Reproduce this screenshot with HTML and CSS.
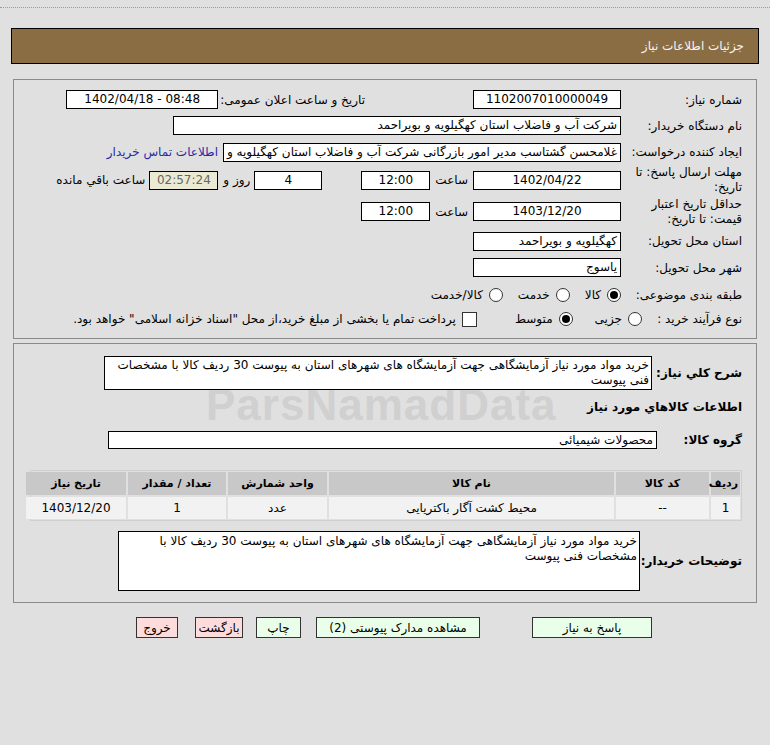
FILE: index.html
```html
<!DOCTYPE html>
<html lang="fa" dir="rtl">
<head>
<meta charset="utf-8">
<title>جزئیات اطلاعات نیاز</title>
<link rel="stylesheet" href="styles.css">
</head>
<body>
<div class="topline"></div>
<div class="header">جزئیات اطلاعات نیاز</div>

<div class="panel p1">
  <div class="row r1">
    <div class="lbl">شماره نیاز:</div>
    <div class="box w148 c">1102007010000049</div>
    <div class="lbl2 m108">تاریخ و ساعت اعلان عمومی:</div>
    <div class="box w152 c ml10" dir="ltr">1402/04/18 - 08:48</div>
  </div>
  <div class="row r2">
    <div class="lbl">نام دستگاه خریدار:</div>
    <div class="box w448">شرکت آب و فاضلاب استان کهگیلویه و بویراحمد</div>
  </div>
  <div class="row r3">
    <div class="lbl">ایجاد کننده درخواست:</div>
    <div class="box w398 clip">غلامحسن گشتاسب مدیر امور بازرگانی شرکت آب و فاضلاب استان کهگیلویه و بویراحمد</div>
    <a class="link" href="#">اطلاعات تماس خریدار</a>
  </div>
  <div class="row r4">
    <div class="lbl two">مهلت ارسال پاسخ: تا تاریخ:</div>
    <div class="box w148 c">1402/04/22</div>
    <div class="lbl2 m5">ساعت</div>
    <div class="box w69 c ml5">12:00</div>
    <div class="box w68 c m39">4</div>
    <div class="lbl2 m4">روز و</div>
    <div class="box w69 c timer ml5">02:57:24</div>
    <div class="lbl2 m4">ساعت باقي مانده</div>
  </div>
  <div class="row r5">
    <div class="lbl two">حداقل تاریخ اعتبار قیمت: تا تاریخ:</div>
    <div class="box w148 c">1403/12/20</div>
    <div class="lbl2 m5">ساعت</div>
    <div class="box w69 c ml5">12:00</div>
  </div>
  <div class="row r6">
    <div class="lbl">استان محل تحویل:</div>
    <div class="box w148">کهگیلویه و بویراحمد</div>
  </div>
  <div class="row r7">
    <div class="lbl">شهر محل تحویل:</div>
    <div class="box w148">یاسوج</div>
  </div>
  <div class="row r8">
    <div class="lbl">طبقه بندی موضوعی:</div>
    <span class="radio on"></span><span class="opt">کالا</span>
    <span class="radio g1"></span><span class="opt">خدمت</span>
    <span class="radio g1"></span><span class="opt">کالا/خدمت</span>
  </div>
  <div class="row r9">
    <div class="lbl short">نوع فرآیند خرید :</div>
    <span class="radio"></span><span class="opt">جزیی</span>
    <span class="radio g2 on"></span><span class="opt">متوسط</span>
    <span class="check"></span><span class="opt">پرداخت تمام یا بخشی از مبلغ خرید،از محل "اسناد خزانه اسلامی" خواهد بود.</span>
  </div>
</div>

<div class="panel p2">
  <div class="wm">ParsNamadData</div>
  <div class="row s1">
    <div class="blbl w84">شرح کلي نیاز:</div>
    <div class="box area1">خرید مواد مورد نیاز آزمایشگاهی جهت آزمایشگاه های شهرهای استان به پیوست 30 ردیف کالا با مشخصات فنی پیوست</div>
  </div>
  <div class="row s2">
    <div class="blbl">اطلاعات کالاهاي مورد نیاز</div>
  </div>
  <div class="row s3">
    <div class="blbl w79">گروه کالا:</div>
    <div class="box w549">محصولات شیمیائی</div>
  </div>
  <div class="grid">
    <div class="th">ردیف</div>
    <div class="th">کد کالا</div>
    <div class="th">نام کالا</div>
    <div class="th">واحد شمارش</div>
    <div class="th">تعداد / مقدار</div>
    <div class="th">تاریخ نیاز</div>
    <div class="td">1</div>
    <div class="td">--</div>
    <div class="td">محیط کشت آگار باکتریایی</div>
    <div class="td">عدد</div>
    <div class="td">1</div>
    <div class="td">1403/12/20</div>
  </div>
  <div class="row s4">
    <div class="blbl w98">توضیحات خریدار:</div>
    <div class="box area2">خرید مواد مورد نیاز آزمایشگاهی جهت آزمایشگاه های شهرهای استان به پیوست 30 ردیف کالا با مشخصات فنی پیوست</div>
  </div>
</div>

<div class="buttons">
  <button class="btn green b1">پاسخ به نیاز</button>
  <button class="btn green b2">مشاهده مدارک پیوستی (2)</button>
  <button class="btn green b3">چاپ</button>
  <button class="btn red b4">بازگشت</button>
  <button class="btn red b5">خروج</button>
</div>
</body>
</html>
```
FILE: styles.css
```css
* { box-sizing: border-box; }
html, body { margin: 0; padding: 0; }
body {
  background: #e0e0e0;
  font-family: Tahoma, "DejaVu Sans", sans-serif;
  font-size: 12px;
  color: #000;
  direction: rtl;
  width: 770px;
  height: 745px;
  overflow: hidden;
}
.topline {
  height: 8px;
  border-bottom: 1px dotted #9a9a9a;
}
.header {
  margin: 20px 11px 0 11px;
  height: 36px;
  background: #8b6d43;
  border: 1px solid #000;
  color: #f4f4f4;
  line-height: 34px;
  padding-right: 14px;
  font-size: 12px;
}
.panel {
  margin: 0 13px;
  border: 1px solid #8a8a8a;
  padding-right: 14px;
  position: relative;
}
.p1 { margin-top: 15px; height: 260px; padding-top: 7px; }
.p2 { margin-top: 4px; height: 260px; padding-top: 12px; }
.row { display: flex; align-items: center; }
.r1 { height: 25px; }
.r2 { height: 27px; }
.r3 { height: 26px; }
.r4 { height: 30px; }
.r5 { height: 33px; }
.r6 { height: 26px; }
.r7 { height: 27px; }
.r8 { height: 27px; }
.r9 { height: 22px; }
.lbl {
  width: 115px;
  margin-left: 6px;
  flex: none;
  white-space: nowrap;
}
.lbl.two { white-space: normal; line-height: 15px; }
.lbl.short { width: 96px; margin-left: 4px; }
.lbl2 { white-space: nowrap; flex: none; }
.m108 { margin-right: 108px; }
.m5 { margin-right: 5px; }
.m4 { margin-right: 4px; }
.m39 { margin-right: 39px; }
.ml10 { margin-right: 2px; }
.ml5 { margin-right: 5px; }
.box {
  background: #fff;
  border: 1px solid #000;
  height: 19px;
  line-height: 17px;
  padding: 0 3px;
  white-space: nowrap;
  overflow: hidden;
  flex: none;
}
.box.c { text-align: center; }
.w148 { width: 148px; }
.w152 { width: 152px; }
.w448 { width: 448px; }
.w398 { width: 398px; }
.w69 { width: 69px; }
.w68 { width: 68px; }
.w549 { width: 549px; }
.timer { background: #ebebd3; color: #666; }
.clip { text-overflow: clip; }
.link {
  color: #2a2aa8;
  text-decoration: none;
  margin-right: 5px;
  white-space: nowrap;
}
.radio {
  width: 14px;
  height: 14px;
  border-radius: 50%;
  border: 1px solid #333;
  background: #fff;
  flex: none;
  position: relative;
  margin-left: 6px;
}
.radio.on::after {
  content: "";
  position: absolute;
  left: 2px; top: 2px;
  width: 8px; height: 8px;
  border-radius: 50%;
  background: #000;
}
.r9 .radio.g2 { margin-right: 22px; }
.r8 .radio.g1 { margin-right: 15px; }
.check {
  width: 15px;
  height: 15px;
  border: 1px solid #333;
  background: #fff;
  flex: none;
  margin-right: 38px;
  margin-left: 6px;
}
.opt { white-space: nowrap; }
.blbl {
  font-weight: bold;
  font-size: 12px;
  white-space: nowrap;
  flex: none;
}
.w84 { width: 84px; margin-left: 6px; }
.w79 { width: 79px; margin-left: 6px; }
.w98 { width: 98px; margin-left: 4px; }
.s1 { height: 34px; }
.area1 {
  width: 548px;
  height: 34px;
  white-space: normal;
  line-height: 15px;
  padding: 1px 2px;
}
.s2 { height: 28px; margin-top: 3px; }
.s3 { height: 18px; margin-top: 10px; }
.s3 .box { height: 18px; line-height: 16px; }
.grid {
  display: grid;
  grid-template-columns: 29px 93px 285px 99px 98px 100px;
  column-gap: 2px;
  row-gap: 2px;
  width: 712px;
  margin-top: 21px;
  padding: 1px;
  border: 1px solid #cfcfcf;
  background: #e0e0e0;
}
.th {
  background: #c8c8c8;
  font-weight: bold;
  font-size: 11px;
  height: 23px;
  line-height: 23px;
  text-align: center;
}
.th:first-child { text-align: right; padding-right: 2px; }
.td {
  background: #f2f2f2;
  height: 22px;
  line-height: 22px;
  text-align: center;
}
.s4 { height: 60px; margin-top: 10px; }
.area2 {
  width: 522px;
  height: 60px;
  white-space: normal;
  line-height: 15px;
  padding: 2px 2px;
}
.wm {
  position: absolute;
  left: 192px;
  top: 36px;
  font-family: "Liberation Sans", Arial, sans-serif;
  font-weight: bold;
  font-size: 44px;
  color: #d0d0d0;
  direction: ltr;
  letter-spacing: 1px;
  pointer-events: none;
}
.p2 .row, .p2 .grid { position: relative; }
.buttons {
  display: flex;
  align-items: center;
  padding-right: 118px;
  margin-top: 14px;
}
.btn {
  font-family: Tahoma, "DejaVu Sans", sans-serif;
  font-size: 12px;
  height: 21px;
  border: 1px solid #333;
  padding: 0;
  color: #000;
  flex: none;
}
.green { background: #eaffea; }
.red { background: #ffdcdc; }
.b1 { width: 120px; }
.b2 { width: 164px; margin-right: 52px; }
.b3 { width: 45px; margin-right: 15px; }
.b4 { width: 48px; margin-right: 13px; }
.b5 { width: 42px; margin-right: 17px; }
```
